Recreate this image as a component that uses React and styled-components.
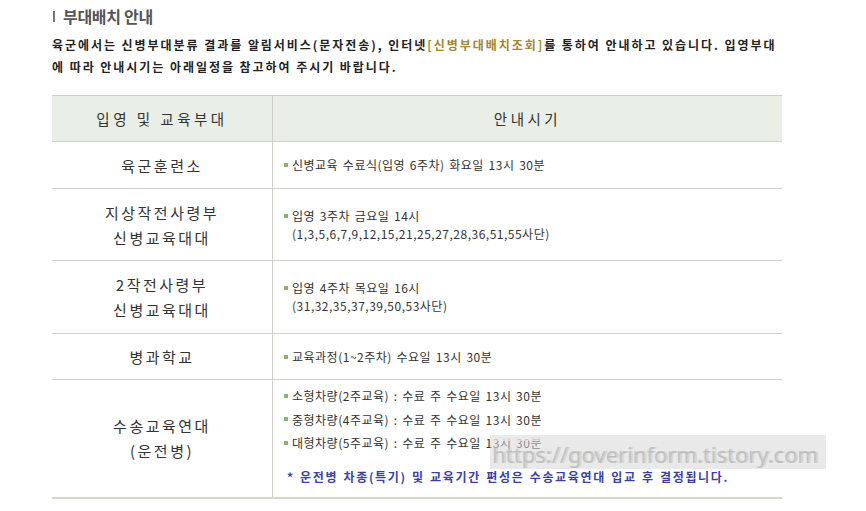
import React from 'react';
import styled, { createGlobalStyle } from 'styled-components';

const GlobalStyle = createGlobalStyle`
  html, body {
    margin: 0;
    padding: 0;
    background: #fff;
  }
  body {
    font-family: 'Noto Sans CJK KR', 'Noto Sans', sans-serif;
    color: #333;
  }
`;

const Page = styled.div`
  position: relative;
  width: 866px;
  height: 511px;
  padding: 5px 0 0 52px;
  box-sizing: border-box;
  overflow: hidden;
`;

const Heading = styled.h2`
  display: flex;
  align-items: center;
  gap: 8px;
  margin: 0;
  height: 22px;
  font-size: 16px;
  font-weight: 700;
  color: #555;
  letter-spacing: -0.3px;
`;

const Bar = styled.span`
  width: 2px;
  height: 11px;
  background: #777;
  margin-left: 1px;
`;

const Intro = styled.p`
  margin: 7px 0 0;
  width: 735px;
  font-size: 12px;
  font-weight: 700;
  line-height: 22px;
  letter-spacing: 1.95px;
  color: #222;
`;

const LinkText = styled.span`
  color: #a3862f;
`;

const Table = styled.table`
  margin-top: 17px;
  width: 730px;
  border-collapse: collapse;
  table-layout: fixed;
  border-top: 1px solid #cfd0c4;
  border-bottom: 2px solid #d6d7cc;
`;

const Th = styled.th`
  height: 43px;
  background: #e9efe6;
  font-size: 14.5px;
  font-weight: 400;
  letter-spacing: 3.5px;
  color: #333;
  text-align: center;
  border-left: ${p => (p.divided ? '1px solid #d0d1c6' : 'none')};
`;

const Row = styled.tr`
  height: ${p => p.h}px;
  border-top: 1px solid #d0d1c6;
`;

const UnitCell = styled.td`
  width: 218px;
  text-align: center;
  font-size: 15px;
  line-height: 25px;
  letter-spacing: 2.5px;
  color: #333;
  padding: 0;
`;

const InfoCell = styled.td`
  border-left: 1px solid #d0d1c6;
  padding: ${p => (p.top ? '4px' : '0')} 0 0 11px;
  font-size: 12px;
  letter-spacing: 0.5px;
  word-spacing: 1.5px;
  color: #333;
  vertical-align: ${p => (p.top ? 'top' : 'middle')};
`;

const Item = styled.div`
  position: relative;
  padding-left: 8px;
  line-height: ${p => p.lh || 18}px;
  &::before {
    content: '';
    position: absolute;
    left: 0;
    top: ${p => ((p.lh || 18) - 4) / 2}px;
    width: 4px;
    height: 4px;
    background: #8fb26e;
  }
`;

const Sub = styled.div`
  padding-left: 8px;
  line-height: 18px;
`;

const Note = styled.div`
  margin-top: 13px;
  padding-left: 3px;
  font-weight: 700;
  color: #3a3fa8;
  letter-spacing: 1.65px;
  word-spacing: 1px;
  line-height: 18px;
`;

const Watermark = styled.div`
  position: absolute;
  left: 490px;
  top: 435px;
  width: 336px;
  height: 34px;
  background: rgba(215, 215, 215, 0.55);
  border-top: 6px solid rgba(235, 235, 235, 0.6);
  box-sizing: border-box;
  font-family: 'Noto Sans', sans-serif;
  font-size: 22px;
  line-height: 26px;
  padding-left: 2px;
  color: rgba(175, 175, 175, 0.65);
  text-shadow: 2px 0 0 rgba(195, 195, 195, 0.5);
  white-space: nowrap;
  overflow: hidden;
`;

const rows = [
  { unit: ['육군훈련소'], h: 47, items: [['신병교육 수료식(입영 6주차) 화요일 13시 30분']] },
  {
    unit: ['지상작전사령부', '신병교육대대'],
    h: 72,
    items: [['입영 3주차 금요일 14시', '(1,3,5,6,7,9,12,15,21,25,27,28,36,51,55사단)']],
  },
  {
    unit: ['2작전사령부', '신병교육대대'],
    h: 73,
    items: [['입영 4주차 목요일 16시', '(31,32,35,37,39,50,53사단)']],
  },
  { unit: ['병과학교'], h: 46, items: [['교육과정(1~2주차) 수요일 13시 30분']] },
];

const App = () => (
  <>
    <GlobalStyle />
    <Page>
      <Heading>
        <Bar />
        부대배치 안내
      </Heading>
      <Intro>
        육군에서는 신병부대분류 결과를 알림서비스(문자전송), 인터넷
        <LinkText>[신병부대배치조회]</LinkText>를 통하여 안내하고 있습니다. 입영부대에 따라
        안내시기는 아래일정을 참고하여 주시기 바랍니다.
      </Intro>
      <Table>
        <thead>
          <tr>
            <Th style={{ width: 218 }}>입영 및 교육부대</Th>
            <Th divided>안내시기</Th>
          </tr>
        </thead>
        <tbody>
          {rows.map(row => (
            <Row key={row.unit.join('')} h={row.h}>
              <UnitCell>
                {row.unit.map(u => (
                  <div key={u}>{u}</div>
                ))}
              </UnitCell>
              <InfoCell>
                {row.items.map(([first, ...rest]) => (
                  <React.Fragment key={first}>
                    <Item>{first}</Item>
                    {rest.map(r => (
                      <Sub key={r}>{r}</Sub>
                    ))}
                  </React.Fragment>
                ))}
              </InfoCell>
            </Row>
          ))}
          <Row h={118}>
            <UnitCell>
              <div>수송교육연대</div>
              <div>(운전병)</div>
            </UnitCell>
            <InfoCell top>
              <Item lh={23.5}>소형차량(2주교육) : 수료 주 수요일 13시 30분</Item>
              <Item lh={23.5}>중형차량(4주교육) : 수료 주 수요일 13시 30분</Item>
              <Item lh={23.5}>대형차량(5주교육) : 수료 주 수요일 13시 30분</Item>
              <Note>* 운전병 차종(특기) 및 교육기간 편성은 수송교육연대 입교 후 결정됩니다.</Note>
            </InfoCell>
          </Row>
        </tbody>
      </Table>
      <Watermark>https://goverinform.tistory.com</Watermark>
    </Page>
  </>
);

export default App;
